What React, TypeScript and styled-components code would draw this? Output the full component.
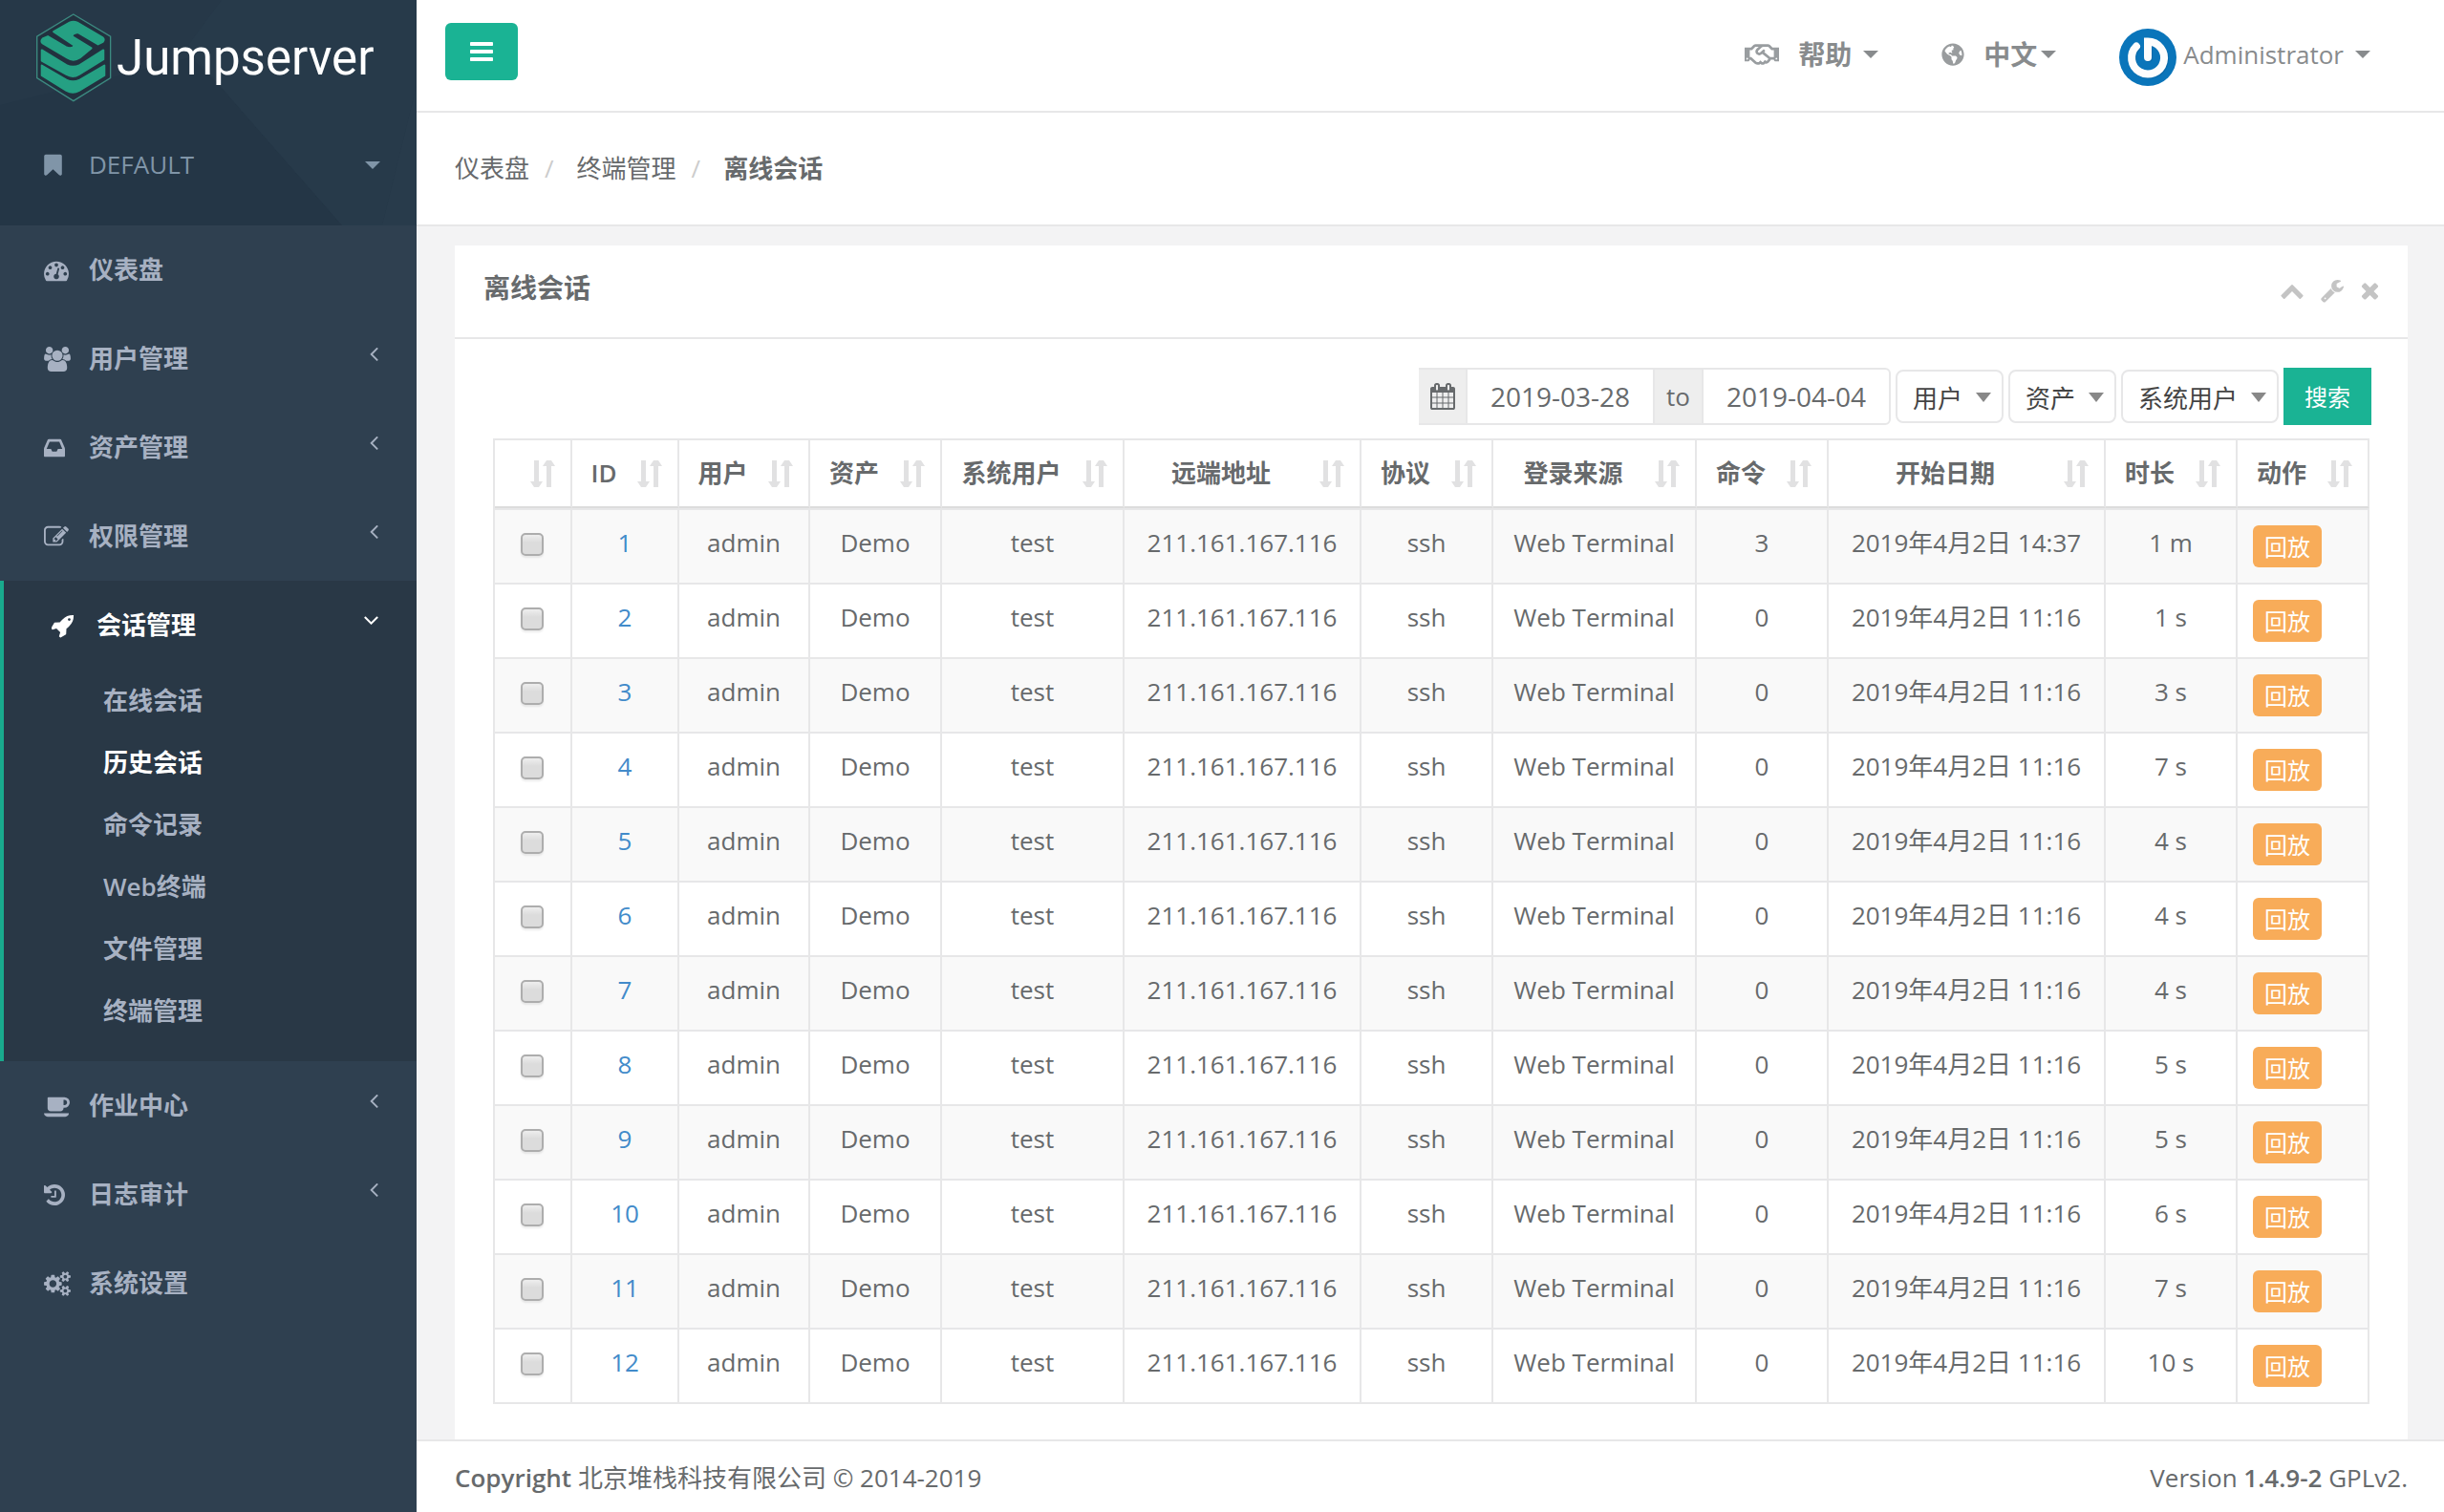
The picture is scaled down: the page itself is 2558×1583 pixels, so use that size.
import React from 'react';
import styled, { createGlobalStyle, css } from 'styled-components';
import { FaRegHandshake, FaGlobeAmericas } from 'react-icons/fa';

const color = {
  text: '#676a6c',
  line: '#e7e7e8',
  page: '#f3f3f4',
  nav: '#2f4050',
  navActive: '#293846',
  navText: '#a7b1c2',
  primary: '#1ab394',
  warning: '#f8ac59',
  link: '#428bca',
};

const GlobalStyle = createGlobalStyle`
  *, *::before, *::after { box-sizing: border-box; }
  body {
    margin: 0;
    background: ${color.page};
    color: ${color.text};
    font-family: 'Open Sans', 'Noto Sans CJK SC', sans-serif;
    font-size: 26px;
    line-height: 37px;
  }
  button, input, select { font: inherit; color: inherit; margin: 0; }
  button { cursor: pointer; padding: 0; border: 0; background: none; }
  a { color: inherit; text-decoration: none; }
  ul, ol { list-style: none; margin: 0; padding: 0; }
  svg { display: block; flex: none; }
`;

/* ---------- icons ---------- */

type Glyph = { x: number; w: number; d: string };

const glyphs: Record<string, Glyph> = {
  bookmark: {
    x: 256, w: 1280,
    d: 'M1420 128q23 0 44 9 33 13 52.5 41t19.5 62v1289q0 34-19.5 62t-52.5 41q-19 8-44 8-48 0-83-32l-441-424-441 424q-36 33-83 33-23 0-44-9-33-13-52.5-41t-19.5-62v-1289q0-34 19.5-62t52.5-41q21-9 44-9h1048z',
  },
  dashboard: {
    x: 0, w: 1792,
    d: 'M384 1152q0-53-37.5-90.5t-90.5-37.5-90.5 37.5-37.5 90.5 37.5 90.5 90.5 37.5 90.5-37.5 37.5-90.5zm192-448q0-53-37.5-90.5t-90.5-37.5-90.5 37.5-37.5 90.5 37.5 90.5 90.5 37.5 90.5-37.5 37.5-90.5zm428 481l101-382q6-26-7.5-48.5t-38.5-29.5-48 6.5-30 39.5l-101 382q-60 5-107 43.5t-63 98.5q-20 77 20 146t117 89 146-20 89-117q16-60-6-117t-72-91zm660-33q0-53-37.5-90.5t-90.5-37.5-90.5 37.5-37.5 90.5 37.5 90.5 90.5 37.5 90.5-37.5 37.5-90.5zm-640-640q0-53-37.5-90.5t-90.5-37.5-90.5 37.5-37.5 90.5 37.5 90.5 90.5 37.5 90.5-37.5 37.5-90.5zm448 192q0-53-37.5-90.5t-90.5-37.5-90.5 37.5-37.5 90.5 37.5 90.5 90.5 37.5 90.5-37.5 37.5-90.5zm320 448q0 261-141 483-19 29-54 29h-1402q-35 0-54-29-141-221-141-483 0-182 71-348t191-286 286-191 348-71 348 71 286 191 191 286 71 348z',
  },
  users: {
    x: 0, w: 1920,
    d: 'M593 896q-162 5-265 128h-134q-82 0-138-40.5t-56-118.5q0-353 124-353 6 0 43.5 21t97.5 42.5 119 21.5q67 0 133-23-5 37-5 66 0 139 81 256zm1071 637q0 120-73 189.5t-194 69.5h-874q-121 0-194-69.5t-73-189.5q0-53 3.5-103.5t14-109 26.5-108.5 43-97.5 62-81 85.5-53.5 111.5-20q10 0 43 21.5t73 48 107 48 135 21.5 135-21.5 107-48 73-48 43-21.5q61 0 111.5 20t85.5 53.5 62 81 43 97.5 26.5 108.5 14 109 3.5 103.5zm-1024-1277q0 106-75 181t-181 75-181-75-75-181 75-181 181-75 181 75 75 181zm704 384q0 159-112.5 271.5t-271.5 112.5-271.5-112.5-112.5-271.5 112.5-271.5 271.5-112.5 271.5 112.5 112.5 271.5zm576 225q0 78-56 118.5t-138 40.5h-134q-103-123-265-128 81-117 81-256 0-29-5-66 66 23 133 23 59 0 119-21.5t97.5-42.5 43.5-21q124 0 124 353zm-128-609q0 106-75 181t-181 75-181-75-75-181 75-181 181-75 181 75 75 181z',
  },
  inbox: {
    x: 128, w: 1536,
    d: 'M1151 960h316q-1-3-2.5-8.5t-2.5-7.5l-212-496h-708l-212 496q-1 3-2.5 8.5t-2.5 7.5h316l95 192h320zm513 30v482q0 26-19 45t-45 19h-1408q-26 0-45-19t-19-45v-482q0-62 25-123l238-552q10-25 36.5-42t52.5-17h832q26 0 52.5 17t36.5 42l238 552q25 61 25 123z',
  },
  edit: {
    x: 0, w: 1792,
    d: 'M888 1184l116-116-152-152-116 116v56h96v96h56zm440-720q-16-16-33 1l-350 350q-17 17-1 33t33-1l350-350q17-17 1-33zm80 594v190q0 119-84.5 203.5t-203.5 84.5h-832q-119 0-203.5-84.5t-84.5-203.5v-832q0-119 84.5-203.5t203.5-84.5h832q63 0 117 25 15 7 18 23 3 17-9 29l-49 49q-14 14-32 8-23-6-45-6h-832q-66 0-113 47t-47 113v832q0 66 47 113t113 47h832q66 0 113-47t47-113v-126q0-13 9-22l64-64q15-15 35-7t20 29zm-96-738l288 288-672 672h-288v-288zm444 132l-92 92-288-288 92-92q28-28 68-28t68 28l152 152q28 28 28 68t-28 68z',
  },
  rocket: {
    x: 64, w: 1664,
    d: 'M1440 448q0-40-28-68t-68-28-68 28-28 68 28 68 68 28 68-28 28-68zm224-288q0 249-75.5 430.5t-253.5 360.5q-81 80-195 176l-20 379q-2 16-16 26l-384 224q-7 4-16 4-12 0-23-9l-64-64q-13-14-8-32l85-276-281-281-276 85q-3 1-9 1-14 0-23-9l-64-64q-17-19-5-39l224-384q10-14 26-16l379-20q96-114 176-195 188-187 358-258t431-71q14 0 24 9.5t10 22.5z',
  },
  coffee: {
    x: 0, w: 1920,
    d: 'M1664 640q0-80-56-136t-136-56h-64v384h64q80 0 136-56t56-136zm-1664 768h1792q0 106-75 181t-181 75h-1280q-106 0-181-75t-75-181zm1856-768q0 159-112.5 271.5t-271.5 112.5h-64v32q0 92-66 158t-158 66h-704q-92 0-158-66t-66-158v-736q0-26 19-45t45-19h1152q159 0 271.5 112.5t112.5 271.5z',
  },
  history: {
    x: 128, w: 1536,
    d: 'M1664 896q0 156-61 298t-164 245-245 164-298 61q-172 0-327-72.5t-264-204.5q-7-10-6.5-22.5t8.5-20.5l137-138q10-9 25-9 16 2 23 12 73 95 179 147t225 52q104 0 198.5-40.5t163.5-109.5 109.5-163.5 40.5-198.5-40.5-198.5-109.5-163.5-163.5-109.5-198.5-40.5q-98 0-188 35.5t-160 101.5l137 138q31 30 14 69-17 40-59 40h-448q-26 0-45-19t-19-45v-448q0-42 40-59 39-17 69 14l130 129q107-101 244.5-156.5t284.5-55.5q156 0 298 61t245 164 164 245 61 298zm-640-288v448q0 14-9 23t-23 9h-320q-14 0-23-9t-9-23v-64q0-14 9-23t23-9h224v-352q0-14 9-23t23-9h64q14 0 23 9t9 23z',
  },
  cogs: {
    x: 0, w: 1920,
    d: 'M896 896q0-106-75-181t-181-75-181 75-75 181 75 181 181 75 181-75 75-181zm768 512q0-52-38-90t-90-38-90 38-38 90q0 53 37.5 90.5t90.5 37.5 90.5-37.5 37.5-90.5zm0-1024q0-52-38-90t-90-38-90 38-38 90q0 53 37.5 90.5t90.5 37.5 90.5-37.5 37.5-90.5zm-384 421v185q0 10-7 19.5t-16 10.5l-155 24q-11 35-32 76 34 48 90 115 7 11 7 20 0 12-7 19-23 30-82.5 89.5t-78.5 59.5q-11 0-21-7l-115-90q-37 19-77 31-11 108-23 155-7 24-30 24h-186q-11 0-20-7.5t-10-17.5l-23-153q-34-10-75-31l-118 89q-7 7-20 7-11 0-21-8-144-133-144-160 0-9 7-19 10-14 41-53t47-61q-23-44-35-82l-152-24q-10-1-17-9.5t-7-19.5v-185q0-10 7-19.5t16-10.5l155-24q11-35 32-76-34-48-90-115-7-11-7-20 0-12 7-20 22-30 82-89t79-59q11 0 21 7l115 90q34-18 77-32 11-108 23-154 7-24 30-24h186q11 0 20 7.5t10 17.5l23 153q34 10 75 31l118-89q8-7 20-7 11 0 21 8 144 133 144 160 0 8-7 19-12 16-42 54t-45 60q23 48 34 82l152 23q10 2 17 10.5t7 19.5zm640 533v140q0 16-149 31-12 27-30 52 51 113 51 138 0 4-4 7-122 71-124 71-8 0-46-47t-52-68q-20 2-30 2t-30-2q-14 21-52 68t-46 47q-2 0-124-71-4-3-4-7 0-25 51-138-18-25-30-52-149-15-149-31v-140q0-16 149-31 13-29 30-52-51-113-51-138 0-4 4-7 4-2 35-20t59-34 30-16q8 0 46 46.5t52 67.5q20-2 30-2t30 2q51-71 92-112l6-2q4 0 124 70 4 3 4 7 0 25-51 138 17 23 30 52 149 15 149 31zm0-1024v140q0 16-149 31-12 27-30 52 51 113 51 138 0 4-4 7-122 71-124 71-8 0-46-47t-52-68q-20 2-30 2t-30-2q-14 21-52 68t-46 47q-2 0-124-71-4-3-4-7 0-25 51-138-18-25-30-52-149-15-149-31v-140q0-16 149-31 13-29 30-52-51-113-51-138 0-4 4-7 4-2 35-20t59-34 30-16q8 0 46 46.5t52 67.5q20-2 30-2t30 2q51-71 92-112l6-2q4 0 124 70 4 3 4 7 0 25-51 138 17 23 30 52 149 15 149 31z',
  },
  angleLeft: {
    x: 582, w: 640,
    d: 'M1203 544q0 13-10 23l-393 393 393 393q10 10 10 23t-10 23l-50 50q-10 10-23 10t-23-10l-466-466q-10-10-10-23t10-23l466-466q10-10 23-10t23 10l50 50q10 10 10 23z',
  },
  angleDown: {
    x: 384, w: 1024,
    d: 'M1395 736q0 13-10 23l-466 466q-10 10-23 10t-23-10l-466-466q-10-10-10-23t10-23l50-50q10-10 23-10t23 10l393 393 393-393q10-10 23-10t23 10l50 50q10 10 10 23z',
  },
  bars: {
    x: 128, w: 1536,
    d: 'M1664 1344v128q0 26-19 45t-45 19h-1408q-26 0-45-19t-19-45v-128q0-26 19-45t45-19h1408q26 0 45 19t19 45zm0-512v128q0 26-19 45t-45 19h-1408q-26 0-45-19t-19-45v-128q0-26 19-45t45-19h1408q26 0 45 19t19 45zm0-512v128q0 26-19 45t-45 19h-1408q-26 0-45-19t-19-45v-128q0-26 19-45t45-19h1408q26 0 45 19t19 45z',
  },
  chevronUp: {
    x: 64, w: 1664,
    d: 'M1683 1331l-166 165q-19 19-45 19t-45-19l-531-531-531 531q-19 19-45 19t-45-19l-166-165q-19-19-19-45.5t19-45.5l742-741q19-19 45-19t45 19l742 741q19 19 19 45.5t-19 45.5z',
  },
  wrench: {
    x: 64, w: 1664,
    d: 'M448 1472q0-26-19-45t-45-19-45 19-19 45 19 45 45 19 45-19 19-45zm644-420l-682 682q-37 37-90 37-52 0-91-37l-106-108q-38-36-38-90 0-53 38-91l681-681q39 98 114.5 173.5t173.5 114.5zm634-435q0 39-23 106-47 134-164.5 217.5t-258.5 83.5q-185 0-316.5-131.5t-131.5-316.5 131.5-316.5 316.5-131.5q58 0 121.5 16.5t107.5 46.5q16 11 16 28t-16 28l-293 169v224l193 107q5-3 79-48.5t135.5-81 70.5-35.5q15 0 23.5 10t8.5 25z',
  },
  times: {
    x: 256, w: 1280,
    d: 'M1490 1322q0 40-28 68l-136 136q-28 28-68 28t-68-28l-294-294-294 294q-28 28-68 28t-68-28l-136-136q-28-28-28-68t28-68l294-294-294-294q-28-28-28-68t28-68l136-136q28-28 68-28t68 28l294 294 294-294q28-28 68-28t68 28l136 136q28 28 28 68t-28 68l-294 294 294 294q28 28 28 68z',
  },
  calendar: {
    x: 64, w: 1664,
    d: 'M192 1664h288v-288h-288v288zm352 0h320v-288h-320v288zm-352-352h288v-320h-288v320zm352 0h320v-320h-320v320zm-352-384h288v-288h-288v288zm736 736h320v-288h-320v288zm-384-736h320v-288h-320v288zm768 736h288v-288h-288v288zm-384-352h320v-320h-320v320zm-352-864v-288q0-13-9.5-22.5t-22.5-9.5h-64q-13 0-22.5 9.5t-9.5 22.5v288q0 13 9.5 22.5t22.5 9.5h64q13 0 22.5-9.5t9.5-22.5zm736 864h288v-320h-288v320zm-384-384h320v-288h-320v288zm384 0h288v-288h-288v288zm32-480v-288q0-13-9.5-22.5t-22.5-9.5h-64q-13 0-22.5 9.5t-9.5 22.5v288q0 13 9.5 22.5t22.5 9.5h64q13 0 22.5-9.5t9.5-22.5zm384-64v1280q0 52-38 90t-90 38h-1408q-52 0-90-38t-38-90v-1280q0-52 38-90t90-38h128v-96q0-66 47-113t113-47h64q66 0 113 47t47 113v96h384v-96q0-66 47-113t113-47h64q66 0 113 47t47 113v96h128q52 0 90 38t38 90z',
  },
};

const Icon = ({ name, size = 26 }: { name: string; size?: number }) => {
  const g = glyphs[name];
  return (
    <svg
      aria-hidden="true"
      width={Math.round((g.w / 1792) * size)}
      height={size}
      viewBox={`${g.x} 0 ${g.w} 1792`}
      fill="currentColor"
    >
      <path d={g.d} />
    </svg>
  );
};

const SortIcon = () => (
  <svg aria-hidden="true" width="26" height="28" viewBox="0 0 26 28" fill="#e1e1e2">
    <path d="M4 0h5v22h4l-4 6h-5l-4-6h4z" />
    <path d="M17 28h5v-22h4l-4-6h-5l-4 6h4z" />
  </svg>
);

const LogoMark = () => (
  <svg aria-hidden="true" width="79" height="93" viewBox="54 40 236 278">
    <path d="M170 43L286 112V242L170 314L56 242V112Z" fill="#22313f" stroke="#3c8a80" strokeWidth="4" />
    <g fill="#25a083" stroke="#25a083" strokeWidth="6" strokeLinejoin="round">
      <path d="M108 97L158 69Q170 63 182 69L262 116Q268 122 262 129L247 137L186 101Q178 98 168 106L166 112L226 149L190 179Q170 192 150 179L74 134Q66 127 74 119L90 112L146 145Q156 150 168 147L172 140Z" />
      <path d="M71 155L148 202Q168 212 190 202L264 155V184L188 231Q168 243 148 231L71 188Z" />
      <path d="M71 203L148 248Q168 258 190 248L267 203V234L188 282Q168 293 148 282L71 234Z" />
    </g>
  </svg>
);

const Avatar = () => (
  <svg aria-hidden="true" width="60" height="60" viewBox="0 0 60 60">
    <circle cx="30" cy="30" r="30" fill="#0a75ba" />
    <path
      d="M18 18.5A17 17 0 1 0 30 13.5V30"
      transform="translate(1 1)"
      fill="none" stroke="#08609c" strokeWidth="8" strokeLinecap="round" strokeOpacity="0.5"
    />
    <path d="M18 18.5A17 17 0 1 0 30 13.5V30" fill="none" stroke="#fdfdfd" strokeWidth="8" strokeLinecap="round" />
  </svg>
);

const Caret = styled.span<{ $tone?: string }>`
  flex: none;
  width: 16px;
  height: 8px;
  border: 8px solid transparent;
  border-top-color: ${(p) => p.$tone ?? 'currentColor'};
  border-bottom: 0;
`;

/* ---------- frame ---------- */

const Shell = styled.div`
  display: flex;
  min-height: 100vh;
`;

const Sidebar = styled.aside`
  flex: 0 0 436px;
  background: ${color.nav};
  color: ${color.navText};
`;

const Main = styled.div`
  flex: 1;
  min-width: 0;
  display: flex;
  flex-direction: column;
`;

/* ---------- sidebar ---------- */

const SideHead = styled.div`
  position: relative;
  background: #263848;
  padding: 14px 38px 45px;
`;

const Facets = styled.svg`
  position: absolute;
  inset: 0;
  width: 100%;
  height: 100%;
`;

const Brand = styled.a`
  position: relative;
  display: flex;
  align-items: center;
  gap: 5px;
  color: #fff;
  font-family: Roboto, 'Liberation Sans', sans-serif;
  font-size: 51px;
  line-height: 60px;
`;

const OrgButton = styled.button`
  position: relative;
  display: flex;
  align-items: center;
  width: 100%;
  margin-top: 47px;
  padding: 0 0 0 8px;
  color: #8095a8;
  text-align: left;
`;

const IconSlot = styled.span`
  flex: 0 0 47px;
`;

const Grow = styled.span`
  flex: 1;
`;

const MenuItem = styled.li<{ $active?: boolean }>`
  ${(p) =>
    p.$active &&
    css`
      padding-bottom: 20px;
      background: ${color.navActive};
      border-left: 4px solid #19aa8d;
    `}
`;

const MenuLink = styled.a<{ $active?: boolean }>`
  display: flex;
  align-items: center;
  padding: 28px 40px 28px ${(p) => (p.$active ? 50 : 46)}px;
  font-weight: 600;
  color: ${(p) => (p.$active ? '#fff' : 'inherit')};
`;

const Arrow = styled.span`
  align-self: flex-start;
`;

const SubLink = styled.a<{ $active?: boolean }>`
  display: block;
  padding: 14px 20px 14px 104px;
  font-weight: 600;
  color: ${(p) => (p.$active ? '#fff' : 'inherit')};
`;

/* ---------- top bar ---------- */

const TopBar = styled.header`
  display: flex;
  align-items: flex-start;
  justify-content: space-between;
  height: 118px;
  padding: 24px 77px 0 30px;
  background: #fff;
  border-bottom: 2px solid ${color.line};
`;

const BurgerButton = styled.button`
  display: flex;
  align-items: center;
  justify-content: center;
  width: 76px;
  height: 60px;
  border-radius: 6px;
  background: ${color.primary};
  color: #fff;
`;

const UserNav = styled.nav`
  display: flex;
  align-items: center;
  gap: 66px;
  height: 66px;
  color: #888b8d;
`;

const NavButton = styled.button`
  display: flex;
  align-items: center;
  gap: 12px;
`;

const NavWord = styled.span`
  padding-left: 8px;
  font-size: 28px;
  font-weight: 600;
`;

const Pair = styled.span`
  display: flex;
  align-items: center;
  gap: 4px;
`;

const UserFace = styled.span`
  display: flex;
  align-items: center;
  gap: 7px;
  & > svg { margin-top: 6px; }
`;

const Crumbs = styled.ol`
  display: flex;
  align-items: center;
  height: 119px;
  padding: 0 40px;
  background: #fff;
  border-bottom: 2px solid ${color.line};
`;

const Crumb = styled.li`
  & + &::before {
    content: '/';
    padding: 0 24px 0 16px;
    color: #ccc;
  }
`;

/* ---------- panel ---------- */

const Content = styled.main`
  flex: 1;
  padding: 20px 38px 0 40px;
`;

const Panel = styled.section`
  height: 100%;
  background: #fff;
`;

const PanelHead = styled.header`
  display: flex;
  align-items: center;
  justify-content: space-between;
  height: 98px;
  padding: 0 30px 2px;
  border-bottom: 2px solid ${color.line};
`;

const PanelTitle = styled.h5`
  margin: 0;
  padding-bottom: 6px;
  font-size: 28px;
  font-weight: 600;
`;

const PanelTools = styled.div`
  display: flex;
  align-items: center;
  gap: 18px;
  color: #c4c4c4;
`;

const PanelBody = styled.div`
  padding: 30px 38px 37px 40px;
`;

/* ---------- filters ---------- */

const Filters = styled.form`
  display: flex;
  align-items: center;
  justify-content: flex-end;
  gap: 5px;
  margin-bottom: 14px;
`;

const DateRange = styled.div`
  display: flex;
  height: 60px;
`;

const Addon = styled.span`
  display: flex;
  align-items: center;
  justify-content: center;
  width: 49px;
  background: #eee;
  border: solid ${color.line};
  border-width: 2px 0;
`;

const DateInput = styled.input`
  width: 198px;
  padding: 0 10px;
  border: 2px solid ${color.line};
  background: #fff;
  font-size: 28px;
  text-align: center;
  &:last-child { border-radius: 0 6px 6px 0; }
`;

const SelectBox = styled.label`
  position: relative;
  color: #888;
`;

const SelectInput = styled.select`
  display: block;
  height: 56px;
  padding: 4px 40px 0 16px;
  appearance: none;
  border: 2px solid ${color.line};
  border-radius: 8px;
  background: #fff;
  color: #444;
`;

const SelectArrow = styled(Caret)`
  position: absolute;
  right: 13px;
  top: 24px;
  height: 10px;
  border-top-width: 10px;
  pointer-events: none;
`;

const SearchButton = styled.button`
  width: 92px;
  height: 60px;
  background: ${color.primary};
  color: #fff;
  font-size: 24px;
`;

/* ---------- table ---------- */

const TableArea = styled.div`
  padding-right: 2px;
`;

const Table = styled.table`
  width: 100%;
  table-layout: fixed;
  border-collapse: separate;
  border-spacing: 0;
  border-left: 2px solid ${color.line};
  border-top: 2px solid ${color.line};
`;

const Th = styled.th`
  padding: 0;
  border-right: 2px solid ${color.line};
  border-bottom: 2px solid #dcdcdc;
  font-weight: 600;
`;

const SortButton = styled.button`
  display: flex;
  align-items: center;
  width: 100%;
  height: 69px;
  padding: 0 16px;
  font-weight: inherit;
  white-space: nowrap;
`;

const SortLabel = styled.span`
  flex: 1;
  margin-right: 18px;
`;

const Row = styled.tr`
  &:nth-child(odd) { background: #f9f9f9; }
  &:first-child > td { border-top: 2px solid ${color.line}; }
`;

const Td = styled.td<{ $left?: boolean }>`
  padding: 16px 16px 0;
  border-right: 2px solid ${color.line};
  border-bottom: 2px solid ${color.line};
  text-align: ${(p) => (p.$left ? 'left' : 'center')};
  vertical-align: top;
  white-space: nowrap;
`;

const CheckBox = styled.input`
  display: block;
  width: 24px;
  height: 24px;
  margin: 8px 0 0 11px;
  appearance: none;
  border: 2px solid #adadad;
  border-radius: 5px;
  background: linear-gradient(#eee, #dcdcdc 40%, #dcdcdc);
  box-shadow: 0 2px 2px rgba(0, 0, 0, 0.08);
`;

const IdLink = styled.a`
  color: ${color.link};
`;

const ReplayButton = styled.button`
  display: block;
  width: 72px;
  height: 44px;
  margin-bottom: 16px;
  border-radius: 6px;
  background: ${color.warning};
  color: #fff;
  font-size: 24px;
`;

/* ---------- footer ---------- */

const Footer = styled.footer`
  display: flex;
  justify-content: space-between;
  padding: 20px 38px 17px 40px;
  background: #fff;
  border-top: 2px solid ${color.line};
`;

const Strong = styled.strong`
  font-weight: 600;
`;

/* ---------- data ---------- */

const menu = [
  { icon: 'dashboard', label: '仪表盘' },
  { icon: 'users', label: '用户管理', more: true },
  { icon: 'inbox', label: '资产管理', more: true },
  { icon: 'edit', label: '权限管理', more: true },
  {
    icon: 'rocket', label: '会话管理', more: true, active: true,
    items: ['在线会话', '历史会话', '命令记录', 'Web终端', '文件管理', '终端管理'],
  },
  { icon: 'coffee', label: '作业中心', more: true },
  { icon: 'history', label: '日志审计', more: true },
  { icon: 'cogs', label: '系统设置' },
];

const columns: [string, number][] = [
  ['', 81], ['ID', 112], ['用户', 137], ['资产', 138], ['系统用户', 191], ['远端地址', 248],
  ['协议', 138], ['登录来源', 213], ['命令', 138], ['开始日期', 290], ['时长', 138], ['动作', 138],
];

const durations = ['1 m', '1 s', '3 s', '7 s', '4 s', '4 s', '4 s', '5 s', '5 s', '6 s', '7 s', '10 s'];

const sessions = durations.map((duration, i) => ({
  id: i + 1,
  commands: i === 0 ? 3 : 0,
  start: i === 0 ? '2019年4月2日 14:37' : '2019年4月2日 11:16',
  duration,
}));

const totalWidth = columns.reduce((sum, [, w]) => sum + w, 0);

/* ---------- page ---------- */

const SideMenu = () => (
  <Sidebar>
    <SideHead>
      <Facets viewBox="0 0 436 236" preserveAspectRatio="none" aria-hidden="true">
        <path d="M0 110L200 60L232 92L358 236H0Z" fill="#243646" />
        <path d="M232 0L195 50L232 92L358 236H400L436 90V0Z" fill="#273a4a" />
        <path d="M436 90L400 236H436Z" fill="#283b4b" />
      </Facets>
      <Brand href="#">
        <LogoMark />
        Jumpserver
      </Brand>
      <OrgButton type="button">
        <IconSlot><Icon name="bookmark" /></IconSlot>
        <Grow>DEFAULT</Grow>
        <Caret />
      </OrgButton>
    </SideHead>
    <ul>
      {menu.map((m) => (
        <MenuItem key={m.label} $active={m.active}>
          <MenuLink href="#" $active={m.active}>
            <IconSlot><Icon name={m.icon} /></IconSlot>
            <Grow>{m.label}</Grow>
            {m.more && <Arrow><Icon name={m.active ? 'angleDown' : 'angleLeft'} /></Arrow>}
          </MenuLink>
          {m.items && (
            <ul>
              {m.items.map((s) => (
                <li key={s}><SubLink href="#" $active={s === '历史会话'}>{s}</SubLink></li>
              ))}
            </ul>
          )}
        </MenuItem>
      ))}
    </ul>
  </Sidebar>
);

const Header = () => (
  <TopBar>
    <BurgerButton type="button" aria-label="菜单"><Icon name="bars" size={28} /></BurgerButton>
    <UserNav>
      <NavButton type="button">
        <FaRegHandshake size={36} color="#999da0" />
        <NavWord>帮助</NavWord>
        <Caret />
      </NavButton>
      <NavButton type="button">
        <FaGlobeAmericas size={24} color="#999c9e" />
        <Pair><NavWord>中文</NavWord><Caret /></Pair>
      </NavButton>
      <NavButton type="button">
        <UserFace><Avatar />Administrator</UserFace>
        <Caret />
      </NavButton>
    </UserNav>
  </TopBar>
);

const FilterBar = () => (
  <Filters>
    <DateRange>
      <Addon><Icon name="calendar" size={28} /></Addon>
      <DateInput type="text" aria-label="开始日期" defaultValue="2019-03-28" />
      <Addon>to</Addon>
      <DateInput type="text" aria-label="结束日期" defaultValue="2019-04-04" />
    </DateRange>
    {['用户', '资产', '系统用户'].map((name) => (
      <SelectBox key={name}>
        <SelectInput aria-label={name}><option>{name}</option></SelectInput>
        <SelectArrow />
      </SelectBox>
    ))}
    <SearchButton type="button">搜索</SearchButton>
  </Filters>
);

const SessionTable = () => (
  <TableArea>
    <Table>
      <colgroup>
        {columns.map(([name, w]) => <col key={name} style={{ width: `${(w / totalWidth) * 100}%` }} />)}
      </colgroup>
      <thead>
        <tr>
          {columns.map(([name]) => (
            <Th key={name} scope="col">
              <SortButton type="button" aria-label={name || '选择'}>
                <SortLabel>{name}</SortLabel>
                <SortIcon />
              </SortButton>
            </Th>
          ))}
        </tr>
      </thead>
      <tbody>
        {sessions.map((s) => (
          <Row key={s.id}>
            <Td><CheckBox type="checkbox" aria-label={`选择 ${s.id}`} /></Td>
            <Td><IdLink href="#">{s.id}</IdLink></Td>
            <Td>admin</Td>
            <Td>Demo</Td>
            <Td>test</Td>
            <Td>211.161.167.116</Td>
            <Td>ssh</Td>
            <Td>Web Terminal</Td>
            <Td>{s.commands}</Td>
            <Td>{s.start}</Td>
            <Td>{s.duration}</Td>
            <Td $left><ReplayButton type="button">回放</ReplayButton></Td>
          </Row>
        ))}
      </tbody>
    </Table>
  </TableArea>
);

export default function App() {
  return (
    <>
      <GlobalStyle />
      <Shell>
        <SideMenu />
        <Main>
          <Header />
          <Crumbs>
            <Crumb><a href="#">仪表盘</a></Crumb>
            <Crumb><a href="#">终端管理</a></Crumb>
            <Crumb><Strong>离线会话</Strong></Crumb>
          </Crumbs>
          <Content>
            <Panel>
              <PanelHead>
                <PanelTitle>离线会话</PanelTitle>
                <PanelTools>
                  <button type="button" aria-label="收起"><Icon name="chevronUp" /></button>
                  <button type="button" aria-label="设置"><Icon name="wrench" /></button>
                  <button type="button" aria-label="关闭"><Icon name="times" /></button>
                </PanelTools>
              </PanelHead>
              <PanelBody>
                <FilterBar />
                <SessionTable />
              </PanelBody>
            </Panel>
          </Content>
          <Footer>
            <span><Strong>Copyright</Strong> 北京堆栈科技有限公司 © 2014-2019</span>
            <span>Version <Strong>1.4.9-2</Strong> GPLv2.</span>
          </Footer>
        </Main>
      </Shell>
    </>
  );
}
